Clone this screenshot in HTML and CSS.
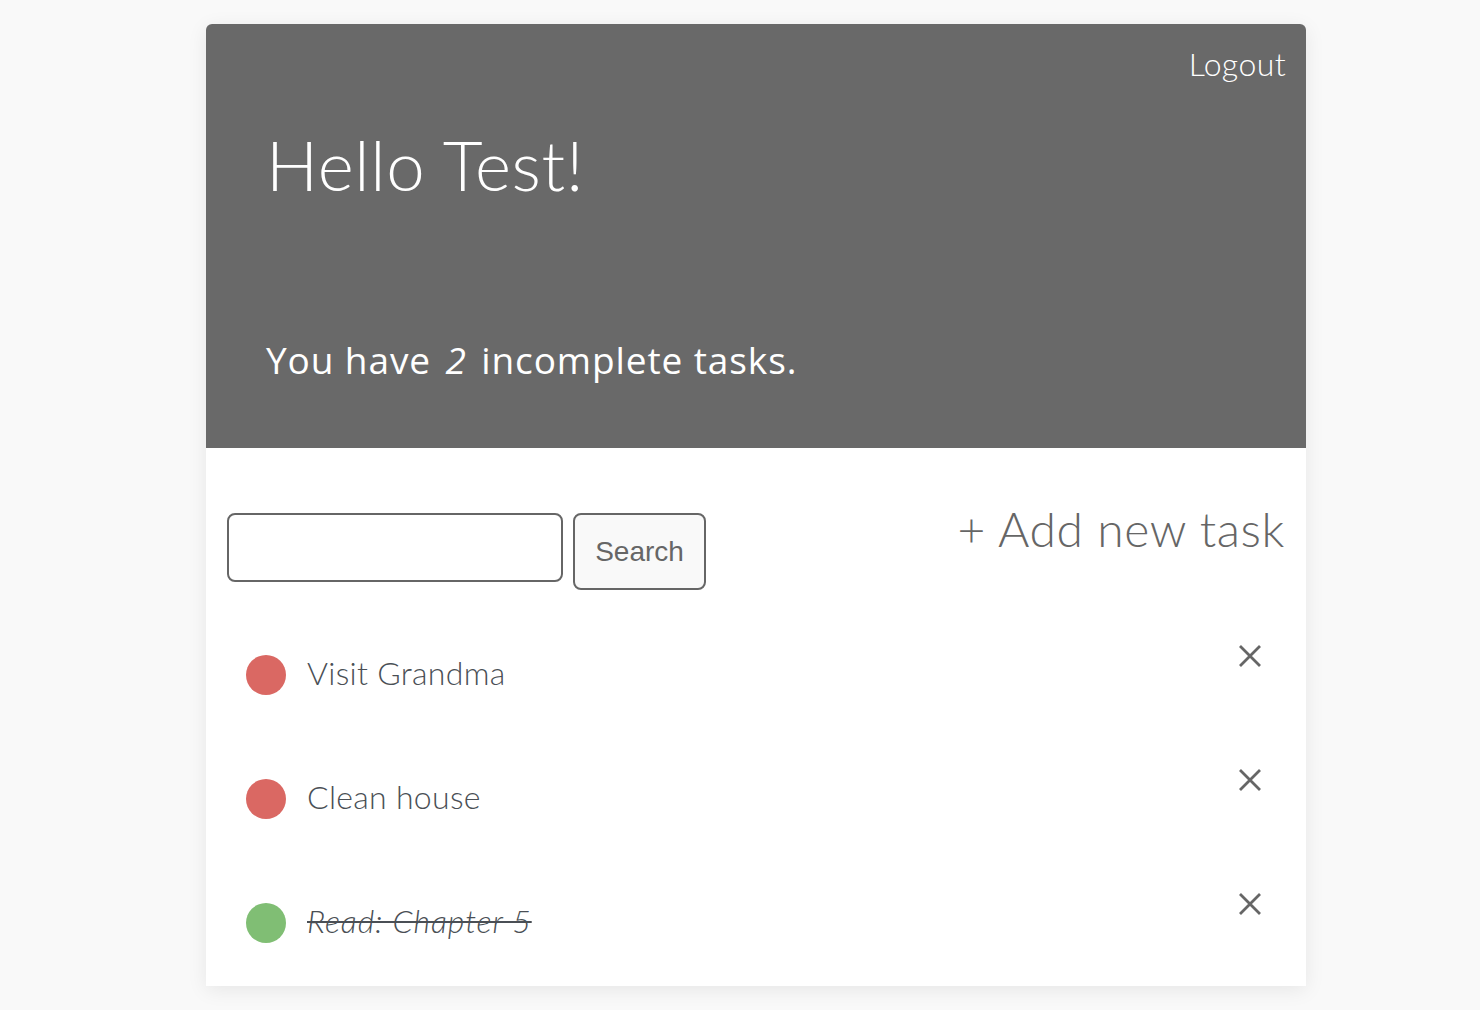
FILE: index.html
```html
<!DOCTYPE html>
<html>
<head>
<meta charset="utf-8">
<link rel="stylesheet" href="styles.css">
</head>
<body>
<div class="card">
  <header class="header">
    <div class="topbar"><a class="logout" href="#">Logout</a></div>
    <h1 class="hello">Hello Test!</h1>
    <p class="summary">You have <em>2</em> incomplete tasks.</p>
  </header>
  <section class="toolbar">
    <form class="search">
      <input class="search-input" type="text">
      <button class="search-btn" type="button">Search</button>
    </form>
    <a class="add" href="#">+ Add new task</a>
  </section>
  <ul class="tasks">
    <li class="task">
      <span class="dot red"></span>
      <span class="label">Visit Grandma</span>
      <svg class="close" viewBox="0 0 24 24" width="24" height="24"><path d="M2 2L22 22M22 2L2 22" stroke="#666" stroke-width="2.8" fill="none"/></svg>
    </li>
    <li class="task">
      <span class="dot red"></span>
      <span class="label">Clean house</span>
      <svg class="close" viewBox="0 0 24 24" width="24" height="24"><path d="M2 2L22 22M22 2L2 22" stroke="#666" stroke-width="2.8" fill="none"/></svg>
    </li>
    <li class="task">
      <span class="dot green"></span>
      <span class="label done">Read: Chapter 5</span>
      <svg class="close" viewBox="0 0 24 24" width="24" height="24"><path d="M2 2L22 22M22 2L2 22" stroke="#666" stroke-width="2.8" fill="none"/></svg>
    </li>
  </ul>
</div>
</body>
</html>
```

FILE: styles.css
```css
* { box-sizing: border-box; }
html, body { margin: 0; padding: 0; }
body {
  background: #f9f9f9;
  font-family: "Lato", "Open Sans", sans-serif;
  height: 1010px;
  overflow: hidden;
}
.card {
  width: 1100px;
  margin: 24px 0 0 206px;
  background: #fff;
  border-radius: 6px 6px 0 0;
  box-shadow: 0 4px 20px rgba(0,0,0,0.08);
  height: 962px;
}
.header {
  background: #696969;
  color: #fff;
  height: 424px;
  border-radius: 6px 6px 0 0;
  padding: 20px 20px 0 60px;
  display: flex;
  flex-direction: column;
}
.topbar { display: flex; justify-content: flex-end; }
.logout {
  color: #fff;
  text-decoration: none;
  font-size: 32px;
  font-weight: 300;
  line-height: 40px;
  letter-spacing: 0.4px;
}
.hello {
  margin: 41px 0 0 0;
  font-size: 69px;
  font-weight: 300;
  line-height: 80px;
  letter-spacing: 0.7px;
}
.summary {
  margin: 131px 0 0 0;
  font-family: "Open Sans", "Lato", sans-serif;
  font-size: 37px;
  font-weight: 400;
  line-height: 48px;
  letter-spacing: 0.9px;
}
.summary em { font-style: italic; margin: 0 4px; }
.toolbar {
  display: flex;
  justify-content: space-between;
  align-items: flex-start;
  padding: 65px 21px 0 21px;
}
.search { display: flex; align-items: flex-start; gap: 10px; margin: 0; }
.search-input {
  width: 336px;
  height: 69px;
  border: 2px solid #666;
  border-radius: 8px;
  background: #fff;
  margin: 0;
}
.search-btn {
  width: 133px;
  height: 77px;
  border: 2px solid #666;
  border-radius: 8px;
  background: #f9f9f9;
  color: #666;
  font-family: "Liberation Sans", Arial, sans-serif;
  font-size: 28px;
  padding: 0;
  margin: 0;
}
.add {
  color: #666;
  text-decoration: none;
  font-size: 48px;
  font-weight: 300;
  line-height: 56px;
  margin-top: -12px;
  letter-spacing: 0.6px;
}
.tasks {
  list-style: none;
  margin: 23px 0 0 0;
  padding: 0 44px 0 40px;
}
.task {
  height: 124px;
  display: flex;
  align-items: flex-start;
}
.dot {
  width: 40px;
  height: 40px;
  border-radius: 50%;
  margin-top: 42px;
  flex: none;
}
.red { background: #da6863; }
.green { background: #80be74; }
.label {
  margin: 41px 0 0 21px;
  font-size: 32px;
  font-weight: 300;
  line-height: 38px;
  color: #4a4f55;
  flex: 1;
  letter-spacing: 0.3px;
}
.done {
  text-decoration: line-through;
  text-decoration-thickness: 2px;
  font-style: italic;
  letter-spacing: 0.9px;
}
.close { margin-top: 31px; flex: none; }
```
